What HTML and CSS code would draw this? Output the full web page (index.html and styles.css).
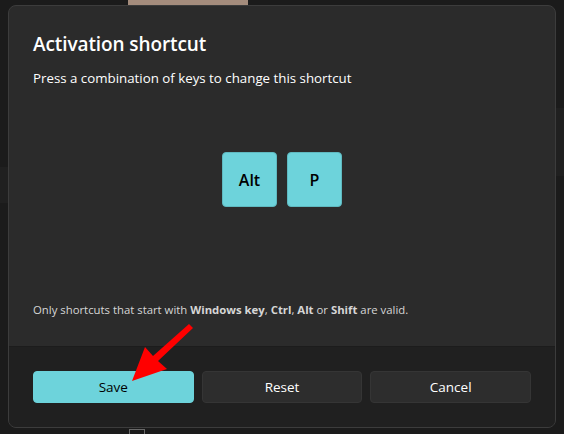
FILE: index.html
```html
<!DOCTYPE html>
<html>
<head>
<meta charset="utf-8">
<link rel="stylesheet" href="styles.css">
</head>
<body>
<div class="backdrop">
  <div class="bg-photo"></div>
  <div class="bg-band bg-band-left"></div>
  <div class="bg-band bg-band-right"></div>
  <div class="bg-icon"></div>
</div>
<div class="dialog">
  <div class="dialog-body">
    <h1 class="title">Activation shortcut</h1>
    <p class="subtitle">Press a combination of keys to change this shortcut</p>
    <div class="keys">
      <div class="key">Alt</div>
      <div class="key">P</div>
    </div>
    <p class="note">Only shortcuts that start with <b>Windows key</b>, <b>Ctrl</b>, <b>Alt</b> or <b>Shift</b> are valid.</p>
  </div>
  <div class="dialog-footer">
    <button class="btn btn-primary">Save</button>
    <button class="btn">Reset</button>
    <button class="btn">Cancel</button>
  </div>
</div>
<svg class="arrow" width="564" height="434" viewBox="0 0 564 434">
  <polygon points="132,381 145,347 153,356 189,324 193,328 158,361 167,369" fill="#ff0000"/>
</svg>
</body>
</html>
```
FILE: styles.css
```css
html, body {
  margin: 0;
  padding: 0;
}
body {
  width: 564px;
  height: 434px;
  overflow: hidden;
  background: #1b1b1b;
  font-family: "Open Sans", "Noto Sans", sans-serif;
  position: relative;
}
.backdrop {
  position: absolute;
  inset: 0;
}
.bg-photo {
  position: absolute;
  left: 128px;
  top: 0;
  width: 120px;
  height: 6px;
  background: #a48c7c;
}
.bg-band {
  position: absolute;
  background: #202020;
}
.bg-band-left {
  left: 0;
  top: 167px;
  width: 8px;
  height: 36px;
}
.bg-band-right {
  right: 0;
  top: 108px;
  width: 8px;
  height: 68px;
}
.bg-icon {
  position: absolute;
  left: 129px;
  top: 429px;
  width: 16px;
  height: 10px;
  border: 1px solid #6a6a6a;
  box-sizing: border-box;
}
.dialog {
  position: relative;
  margin: 5px 0 0 8px;
  width: 546px;
  height: 421px;
  border: 1px solid #3c3c3c;
  border-radius: 8px;
  background: #2b2b2b;
  overflow: hidden;
  display: flex;
  flex-direction: column;
  color: #ffffff;
}
.dialog-body {
  flex: 1;
  padding: 24px 24px 0 24px;
  display: flex;
  flex-direction: column;
}
.title {
  margin: 0;
  font-size: 19px;
  line-height: 28px;
  font-weight: 600;
  letter-spacing: -0.1px;
}
.subtitle {
  margin: 10px 0 0 0;
  font-size: 13.3px;
  line-height: 20px;
  font-weight: 400;
}
.keys {
  margin-top: 64px;
  display: flex;
  justify-content: center;
  gap: 10px;
}
.key {
  width: 53px;
  height: 53px;
  border: 1px solid #5fb9c0;
  border-radius: 4px;
  background: #6dd3db;
  color: #000000;
  font-size: 16px;
  font-weight: 600;
  display: flex;
  align-items: center;
  justify-content: center;
}
.note {
  margin: 95px 0 0 0;
  font-size: 11.35px;
  line-height: 16px;
  color: #d6d6d6;
}
.note b {
  font-weight: 700;
}
.dialog-footer {
  height: 81px;
  box-sizing: border-box;
  background: #202020;
  border-top: 1px solid #1c1c1c;
  padding: 24px 24px 0 24px;
  display: flex;
  gap: 8px;
}
.btn {
  flex: 1;
  height: 32px;
  border: 1px solid #353535;
  border-radius: 4px;
  background: #2d2d2d;
  color: #ffffff;
  font-family: inherit;
  font-size: 13.5px;
  padding: 0;
}
.btn-primary {
  background: #6dd3db;
  border-color: #6dd3db;
  color: #000000;
}
.arrow {
  position: absolute;
  left: 0;
  top: 0;
}
```
